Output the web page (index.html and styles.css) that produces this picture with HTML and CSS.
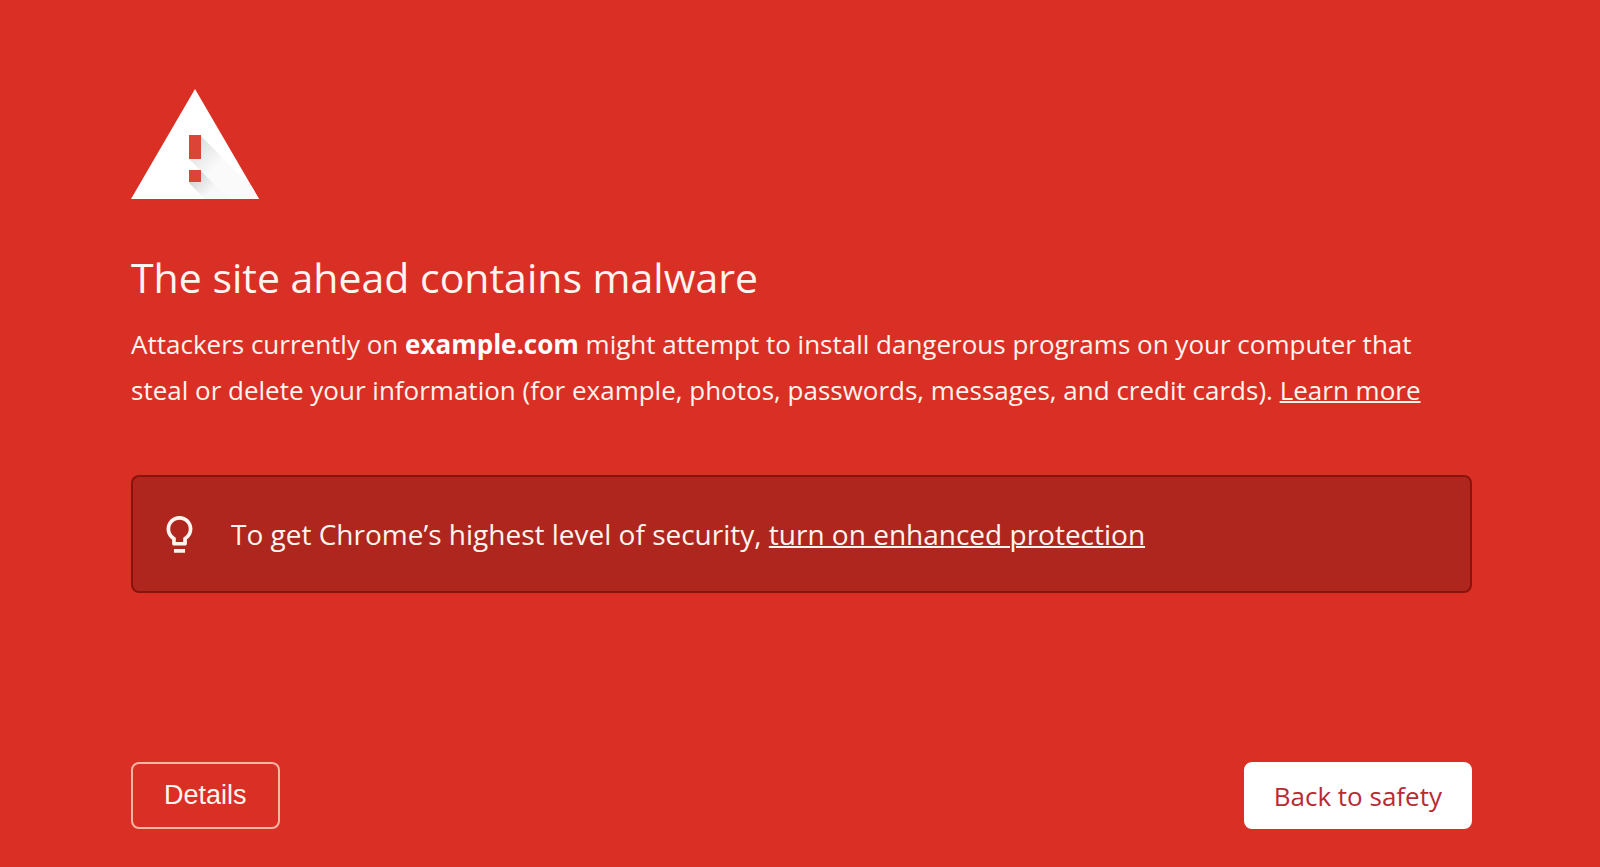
FILE: index.html
```html
<!DOCTYPE html>
<html lang="en">

<head>
    <meta charset="UTF-8">
    <meta name="viewport" content="width=device-width, initial-scale=1.0">
    <title>Security error</title>
    <link rel="stylesheet" href="styles.css">
</head>

<body>
    <main class="interstitial">
        <svg class="warning-icon" viewBox="0 0 128 110" aria-hidden="true">
            <defs>
                <linearGradient id="shade" gradientUnits="userSpaceOnUse" x1="62" y1="52" x2="86" y2="76">
                    <stop offset="0" stop-color="#dadada"/>
                    <stop offset="1" stop-color="#fafafa"/>
                </linearGradient>
                <linearGradient id="shade-dot" gradientUnits="userSpaceOnUse" x1="64" y1="86" x2="80" y2="102">
                    <stop offset="0" stop-color="#d4d4d4"/>
                    <stop offset="1" stop-color="#f8f8f8"/>
                </linearGradient>
            </defs>
            <path d="M64 0l64 110H0z" fill="#fff"/>
            <path d="M70 47l51 51 7 12H98L58 70z" fill="url(#shade)"/>
            <path d="M70 82l28 28H74L58 94z" fill="url(#shade-dot)"/>
            <path d="M58 46h12v24H58zM58 81h12v12H58z" fill="#db4437"/>
        </svg>

        <h1>The site ahead contains malware</h1>
        <p class="message">Attackers currently on <strong>example.com</strong> might attempt to install dangerous programs on your computer that steal or delete your information (for example, photos, passwords, messages, and credit cards). <a href="#">Learn more</a></p>

        <div class="promo">
            <svg class="bulb-icon" viewBox="5 2 14 20" aria-hidden="true">
                <path d="M9 19.800h6v2H9zM12 2C8.100 2 5 5.100 5 9c0 2.400 1.200 4.500 3 5.700V17c0 .5.4 1 1 1h6c.6 0 1-.5 1-1v-2.300c1.800-1.300 3-3.400 3-5.700 0-3.900-3.100-7-7-7zm2.900 11.100l-.9.600V16h-4v-2.300l-.9-.6C7.800 12.200 7 10.600 7 9c0-2.800 2.200-5 5-5s5 2.200 5 5c0 1.600-.8 3.200-2.100 4.100z"/>
            </svg>
            <p>To get Chrome’s highest level of security, <a href="#">turn on enhanced protection</a></p>
        </div>

        <div class="buttons">
            <button type="button" class="details">Details</button>
            <button type="button" class="primary">Back to safety</button>
        </div>
    </main>
</body>

</html>
```

FILE: styles.css
```css
/* General Styles */
* {
    box-sizing: border-box;
}

body {
    font-family: 'Segoe UI', 'Open Sans', sans-serif;
    background-color: #da2f25;
    margin: 0;
    color: #fff4ee;
}

a {
    color: inherit;
    text-decoration-thickness: 2px;
}

.interstitial {
    padding: 89px 128px 36px 131px;
}

.warning-icon {
    display: block;
    width: 128px;
    height: 110px;
}

h1 {
    font-size: 41px;
    font-weight: 400;
    line-height: 56px;
    margin: 50px 0 16px;
}

.message {
    font-size: 26px;
    line-height: 46px;
    margin: 0;
}

.message strong {
    color: #fff;
}

/* Enhanced protection box */
.promo {
    display: flex;
    align-items: center;
    gap: 38px;
    min-height: 118px;
    margin-top: 62px;
    padding: 0 33px;
    border: 2px solid #8b130d;
    border-radius: 8px;
    background-color: #ae261e;
    font-size: 28px;
}

.promo p {
    margin: 0;
}

.bulb-icon {
    width: 27px;
    height: 37px;
    fill: #fff4ee;
}

/* Buttons */
.buttons {
    display: flex;
    justify-content: space-between;
    margin-top: 169px;
}

button {
    height: 67px;
    padding: 0 28px;
    border: 2px solid #fff;
    border-radius: 8px;
    font-size: 26px;
    cursor: pointer;
}

.details {
    padding: 0 31px;
    border-color: #f8b5a4;
    background-color: transparent;
    color: #fff4ee;
    font-family: 'Liberation Sans', Arial, sans-serif;
    font-size: 27px;
}

.primary {
    background-color: #fff;
    color: #b92a32;
    font-family: inherit;
}
```
